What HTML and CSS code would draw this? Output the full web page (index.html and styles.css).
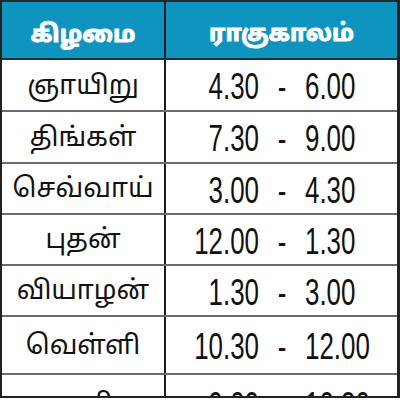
FILE: index.html
```html
<!DOCTYPE html>
<html lang="ta">
<head>
<meta charset="utf-8">
<link rel="stylesheet" href="styles.css">
</head>
<body>
<div class="table">
  <div class="row head">
    <div class="cell day">கிழமை</div>
    <div class="cell time">ராகுகாலம்</div>
  </div>
  <div class="row r50">
    <div class="cell day">ஞாயிறு</div>
    <div class="cell time"><span class="a">4.30</span><span class="dash">-</span><span class="b">6.00</span></div>
  </div>
  <div class="row r50">
    <div class="cell day">திங்கள்</div>
    <div class="cell time"><span class="a">7.30</span><span class="dash">-</span><span class="b">9.00</span></div>
  </div>
  <div class="row r49">
    <div class="cell day">செவ்வாய்</div>
    <div class="cell time"><span class="a">3.00</span><span class="dash">-</span><span class="b">4.30</span></div>
  </div>
  <div class="row r49">
    <div class="cell day">புதன்</div>
    <div class="cell time"><span class="a">12.00</span><span class="dash">-</span><span class="b">1.30</span></div>
  </div>
  <div class="row r49">
    <div class="cell day">வியாழன்</div>
    <div class="cell time"><span class="a">1.30</span><span class="dash">-</span><span class="b">3.00</span></div>
  </div>
  <div class="row r56">
    <div class="cell day">வெள்ளி</div>
    <div class="cell time"><span class="a">10.30</span><span class="dash">-</span><span class="b">12.00</span></div>
  </div>
  <div class="row last">
    <div class="cell day">சனி</div>
    <div class="cell time"><span class="a">9.00</span><span class="dash">-</span><span class="b">10.30</span></div>
  </div>
</div>
</body>
</html>
```

FILE: styles.css
```css
html, body {
  margin: 0;
  padding: 0;
  background: #ffffff;
  overflow: hidden;
}
.table {
  width: 400px;
  box-sizing: border-box;
  border-top: 2px solid #1d2a30;
  border-left: 2px solid #222;
  border-right: 3px solid #222;
  font-family: "Noto Sans Tamil", "Lohit Tamil", "Noto Sans", "DejaVu Sans", sans-serif;
  color: #111;
}
.row {
  display: grid;
  grid-template-columns: 164px 1fr;
  border-bottom: 2px solid #6a6a6a;
  overflow: hidden;
}
.row.head {
  height: 56px;
  background: #0f93bf;
  color: #ffffff;
  border-bottom: 2px solid #17313d;
}
.r50 { height: 50px; }
.r49 { height: 49px; }
.r56 { height: 56px; }
.row.last {
  height: 21px;
  border-bottom: 2px solid #222;
}
.last .cell {
  height: 50px;
}
.last .cell.day { padding-top: 10px; }
.last .cell.time { padding-top: 10px; }
.cell {
  display: flex;
  align-items: center;
  justify-content: center;
  overflow: hidden;
  box-sizing: border-box;
}
.cell.day {
  border-right: 2px solid #1b1b1b;
  font-size: 26.5px;
  padding-top: 4px;
}
.head .cell {
  font-weight: bold;
  padding-top: 11px;
  -webkit-text-stroke: 1px #ffffff;
}
.head .cell.day {
  font-size: 24px;
}
.head .cell.time {
  font-size: 23.5px;
}
.cell.time {
  display: grid;
  grid-template-columns: 93px 46px 1fr;
  align-items: center;
  padding-top: 4px;
  font-family: "Liberation Sans", Arial, sans-serif;
  font-size: 36px;
}
.head .cell.time {
  display: flex;
  font-family: "Noto Sans Tamil", "Lohit Tamil", "Noto Sans", sans-serif;
  padding-top: 11px;
}
.time .a {
  text-align: right;
  transform: scaleX(0.72);
  transform-origin: right center;
  white-space: nowrap;
}
.time .dash {
  text-align: center;
  transform: scaleX(0.72);
}
.time .b {
  text-align: left;
  transform: scaleX(0.72);
  transform-origin: left center;
  white-space: nowrap;
}
```
